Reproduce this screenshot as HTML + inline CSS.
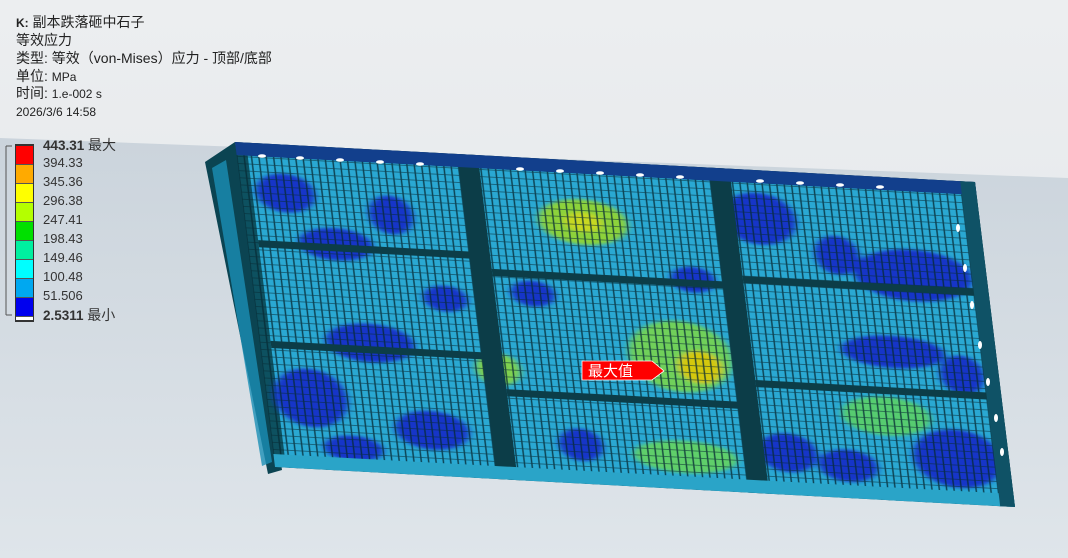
<!DOCTYPE html>
<html><head><meta charset="utf-8"><style>
body{margin:0;width:1068px;height:558px;overflow:hidden;font-family:"Liberation Sans","Noto Sans CJK SC",sans-serif;}
#bg{position:absolute;left:0;top:0;width:1068px;height:558px;}
.t{position:absolute;left:16px;color:#222;font-size:14px;line-height:16px;white-space:nowrap}
.lg{position:absolute;left:43px;font-size:13px;color:#333}
.sw{position:absolute;left:16px;width:17px;height:18px;border-bottom:1px solid #555}
</style></head><body>
<svg id="bg" width="1068" height="558" viewBox="0 0 1068 558">
<defs>
<linearGradient id="g1" x1="0" y1="0" x2="0" y2="1"><stop offset="0" stop-color="#eceef0"/><stop offset="1" stop-color="#e1e5e8"/></linearGradient>
<linearGradient id="g2" x1="0" y1="0" x2="0" y2="1"><stop offset="0" stop-color="#cbd4dc"/><stop offset="1" stop-color="#dfe5ea"/></linearGradient>
<pattern id="mesh" width="10" height="22" patternUnits="userSpaceOnUse"><rect width="10" height="22" fill="none" stroke="#062a34" stroke-width="2"/></pattern>
<filter id="bl"><feGaussianBlur stdDeviation="5"/></filter>
</defs>
<rect width="1068" height="558" fill="url(#g1)"/>
<polygon points="0,138 1068,178 1068,558 0,558" fill="url(#g2)"/>
<polygon points="205,162 235,142 282,470 268,474" fill="#0b4452"/>
<polygon points="212,168 226,160 272,462 262,466" fill="#1a8fb5" opacity=".8"/>
<g transform="matrix(0.74,0.04,0.04,0.325,235,142)">
<rect x="0" y="0" width="1000" height="1000" fill="#0d5160"/>
<rect x="15" y="40" width="970" height="930" fill="#2aa8d2"/>
<g filter="url(#bl)" fill="#1234c8">
<ellipse cx="460" cy="190" rx="60" ry="70" fill="#8cd23a"/>
<ellipse cx="460" cy="190" rx="25" ry="30" fill="#c8d820"/>
<ellipse cx="570" cy="590" rx="70" ry="110" fill="#6fd05a"/>
<ellipse cx="595" cy="620" rx="30" ry="50" fill="#d4c810"/>
<ellipse cx="560" cy="900" rx="70" ry="50" fill="#5fcf6a"/>
<ellipse cx="840" cy="740" rx="60" ry="60" fill="#56cc70"/>
<ellipse cx="320" cy="660" rx="30" ry="50" fill="#7fd150"/>
<ellipse cx="120" cy="300" rx="50" ry="50"/>
<ellipse cx="60" cy="150" rx="40" ry="60"/>
<ellipse cx="200" cy="200" rx="30" ry="60"/>
<ellipse cx="150" cy="600" rx="60" ry="60"/>
<ellipse cx="60" cy="780" rx="50" ry="90"/>
<ellipse cx="220" cy="860" rx="50" ry="60"/>
<ellipse cx="110" cy="930" rx="40" ry="40"/>
<ellipse cx="700" cy="150" rx="50" ry="80"/>
<ellipse cx="900" cy="300" rx="80" ry="80"/>
<ellipse cx="800" cy="250" rx="30" ry="60"/>
<ellipse cx="860" cy="540" rx="70" ry="50"/>
<ellipse cx="930" cy="860" rx="60" ry="90"/>
<ellipse cx="780" cy="900" rx="40" ry="50"/>
<ellipse cx="700" cy="870" rx="40" ry="60"/>
<ellipse cx="380" cy="420" rx="30" ry="40"/>
<ellipse cx="600" cy="350" rx="30" ry="40"/>
<ellipse cx="420" cy="880" rx="30" ry="50"/>
<ellipse cx="260" cy="450" rx="30" ry="40"/>
<ellipse cx="950" cy="600" rx="30" ry="60"/>
</g>
<rect x="0" y="0" width="1000" height="1000" fill="url(#mesh)" opacity=".8"/>
<rect x="300" y="0" width="28" height="1000" fill="#0c3d48"/>
<rect x="640" y="0" width="28" height="1000" fill="#0c3d48"/>
<rect x="15" y="300" width="285" height="22" fill="#0c3d48"/>
<rect x="15" y="610" width="285" height="22" fill="#0c3d48"/>
<rect x="328" y="350" width="312" height="22" fill="#0c3d48"/>
<rect x="328" y="720" width="312" height="22" fill="#0c3d48"/>
<rect x="668" y="330" width="320" height="22" fill="#0c3d48"/>
<rect x="668" y="650" width="320" height="22" fill="#0c3d48"/>
<rect x="0" y="0" width="1000" height="40" fill="#123f8c"/>
<rect x="0" y="960" width="1000" height="40" fill="#2aa4c8"/>
<rect x="980" y="0" width="20" height="1000" fill="#0f5266"/>
</g>
<g fill="#fff">
<ellipse cx="262" cy="156" rx="4" ry="1.8"/><ellipse cx="300" cy="158" rx="4" ry="1.8"/><ellipse cx="340" cy="160" rx="4" ry="1.8"/><ellipse cx="380" cy="162" rx="4" ry="1.8"/><ellipse cx="420" cy="164" rx="4" ry="1.8"/><ellipse cx="520" cy="169" rx="4" ry="1.8"/><ellipse cx="560" cy="171" rx="4" ry="1.8"/><ellipse cx="600" cy="173" rx="4" ry="1.8"/><ellipse cx="640" cy="175" rx="4" ry="1.8"/><ellipse cx="680" cy="177" rx="4" ry="1.8"/><ellipse cx="760" cy="181" rx="4" ry="1.8"/><ellipse cx="800" cy="183" rx="4" ry="1.8"/><ellipse cx="840" cy="185" rx="4" ry="1.8"/><ellipse cx="880" cy="187" rx="4" ry="1.8"/>
<ellipse cx="958" cy="228" rx="2" ry="4"/><ellipse cx="965" cy="268" rx="2" ry="4"/><ellipse cx="972" cy="305" rx="2" ry="4"/><ellipse cx="980" cy="345" rx="2" ry="4"/><ellipse cx="988" cy="382" rx="2" ry="4"/><ellipse cx="996" cy="418" rx="2" ry="4"/><ellipse cx="1002" cy="452" rx="2" ry="4"/>
</g>
<polygon points="582,361 652,361 664,371 652,380 582,380" fill="#f00" stroke="#fff" stroke-width="0.8"/>
<text x="588" y="376" fill="#fff" font-size="15" font-family="Liberation Sans,Noto Sans CJK SC,sans-serif">最大值</text>
<line x1="6" y1="146" x2="6" y2="315" stroke="#555"/><line x1="6" y1="146" x2="12" y2="146" stroke="#555"/><line x1="6" y1="315" x2="12" y2="315" stroke="#555"/>
</svg>
<div class="t" style="top:14px"><b style="font-size:12px">K:</b> 副本跌落砸中石子</div>
<div class="t" style="top:32px">等效应力</div>
<div class="t" style="top:50px">类型: 等效（von-Mises）应力 - 顶部/底部</div>
<div class="t" style="top:68px">单位: <span style="font-size:12px">MPa</span></div>
<div class="t" style="top:85px">时间: <span style="font-size:12px">1.e-002 s</span></div>
<div class="t" style="top:104px;font-size:12px">2026/3/6 14:58</div>
<div style="position:absolute;left:15px;top:144px;width:19px;height:178px;background:#333"></div>
<div class="sw" style="top:146px;background:#f00"></div>
<div class="sw" style="top:165px;background:#ffaa00"></div>
<div class="sw" style="top:184px;background:#ffff00"></div>
<div class="sw" style="top:203px;background:#b4ff00"></div>
<div class="sw" style="top:222px;background:#00e000"></div>
<div class="sw" style="top:241px;background:#00f0a0"></div>
<div class="sw" style="top:260px;background:#00ffff"></div>
<div class="sw" style="top:279px;background:#00a8f0"></div>
<div class="sw" style="top:298px;background:#0000ee"></div>
<div class="sw" style="top:317px;height:3px;background:#fff;border:0"></div>
<div class="lg" style="top:135px;font-weight:bold;font-size:13.5px">443.31 <span style="font-weight:normal;font-size:14px">最大</span></div>
<div class="lg" style="top:155px">394.33</div>
<div class="lg" style="top:174px">345.36</div>
<div class="lg" style="top:193px">296.38</div>
<div class="lg" style="top:212px">247.41</div>
<div class="lg" style="top:231px">198.43</div>
<div class="lg" style="top:250px">149.46</div>
<div class="lg" style="top:269px">100.48</div>
<div class="lg" style="top:288px">51.506</div>
<div class="lg" style="top:305px;font-weight:bold;font-size:13.5px">2.5311 <span style="font-weight:normal;font-size:14px">最小</span></div>
</body></html>
